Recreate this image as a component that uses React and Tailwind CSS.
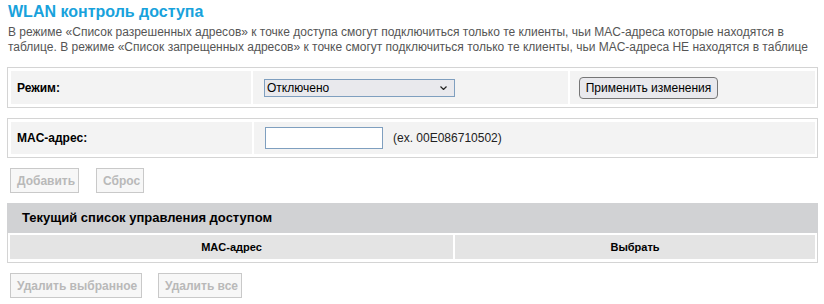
import React, { useState } from "react";

export default function App() {
  const [mode, setMode] = useState("off");
  const [mac, setMac] = useState("");

  const cell = "bg-[#f3f3f3] flex items-center";
  const disabledBtn =
    "h-[25px] px-[6px] whitespace-nowrap border border-[#c9c9c9] bg-[#f7f7f7] text-[#b9b9b9] font-bold text-[12px] leading-none";

  return (
    <div className="w-[824px] h-[304px] bg-white pl-[7px] pr-[6px] font-['Liberation_Sans',Arial,sans-serif] text-[12px] text-black">
      <h1 className="pl-px pt-px text-[16px] leading-[22px] font-bold text-[#18a2dc]">
        WLAN контроль доступа
      </h1>
      <p className="pl-px mt-[2px] leading-[15px] text-[#555]">
        В режиме «Список разрешенных адресов» к точке доступа смогут подключиться только те клиенты, чьи MAC-адреса которые находятся в таблице. В режиме «Список запрещенных адресов» к точке смогут подключиться только те клиенты, чьи MAC-адреса НЕ находятся в таблице
      </p>

      {/* mode */}
      <div className="mt-[12px] border border-[#d4d4d4] flex gap-[2px] pl-[3px] pr-[2px] pt-[3px] pb-[3px]">
        <div className={`${cell} w-[240px] h-[33px] pl-[6px] font-bold`}>Режим:</div>
        <div className={`${cell} w-[315px] h-[33px] pl-[11px]`}>
          <div className="relative w-[191px] h-[18px]">
            <select
              value={mode}
              onChange={(e) => setMode(e.target.value)}
              className="appearance-none w-full h-full border border-[#7f9fbf] bg-[#e9e9ed] pl-[2px] text-[12px] leading-none outline-none"
            >
              <option value="off">Отключено</option>
              <option value="allow">Список разрешенных адресов</option>
              <option value="deny">Список запрещенных адресов</option>
            </select>
            <svg className="absolute right-[8px] top-[7px] pointer-events-none" width="7" height="4" viewBox="0 0 7 4">
              <path d="M0.5 0.5 L3.5 3.5 L6.5 0.5" fill="none" stroke="#222" strokeWidth="1.2" />
            </svg>
          </div>
        </div>
        <div className={`${cell} flex-1 h-[33px] pl-[9px]`}>
          <button className="w-[139px] h-[22px] rounded-[4px] border border-[#767676] bg-[#e9e9ed] text-[12px] leading-none">
            Применить изменения
          </button>
        </div>
      </div>

      {/* mac */}
      <div className="mt-[10px] border border-[#d4d4d4] flex gap-[2px] pl-[3px] pr-[2px] pt-[3px] pb-[3px]">
        <div className={`${cell} w-[241px] h-[32px] pl-[6px] font-bold`}>MAC-адрес:</div>
        <div className={`${cell} flex-1 h-[32px] pl-[11px]`}>
          <input
            value={mac}
            onChange={(e) => setMac(e.target.value)}
            className="w-[118px] h-[22px] border border-[#7f9fbf] bg-white px-[2px] text-[12px] outline-none"
          />
          <span className="ml-[10px] text-[#222]">(ex. 00E086710502)</span>
        </div>
      </div>

      <div className="mt-[10px] ml-[3px] flex gap-[17px]">
        <button disabled className={`${disabledBtn} w-[69px]`}>Добавить</button>
        <button disabled className={`${disabledBtn} w-[48px]`}>Сброс</button>
      </div>

      {/* list */}
      <div className="mt-[10px] border border-t-0 border-[#d4d4d4]">
        <div className="h-[30px] -mx-px bg-[#d1d2d4] flex items-center pl-[15px] font-bold text-[13px]">
          Текущий список управления доступом
        </div>
        <div className="flex gap-[2px] px-[2px] pt-[2px] pb-[3px]">
          <div className="w-[443px] h-[24px] bg-[#e4e4e4] flex items-center justify-center font-bold text-[11px]">
            MAC-адрес
          </div>
          <div className="flex-1 h-[24px] bg-[#e4e4e4] flex items-center justify-center font-bold text-[11px]">
            Выбрать
          </div>
        </div>
      </div>

      <div className="mt-[10px] ml-[3px] flex gap-[16px]">
        <button disabled className={`${disabledBtn} w-[132px]`}>Удалить выбранное</button>
        <button disabled className={`${disabledBtn} w-[84px]`}>Удалить все</button>
      </div>
    </div>
  );
}
